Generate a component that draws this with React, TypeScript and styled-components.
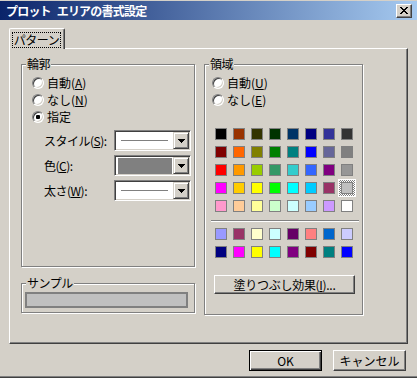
import React from 'react';
import styled, { createGlobalStyle } from 'styled-components';

const GlobalStyle = createGlobalStyle`
  html, body { margin: 0; padding: 0; background: #D4D0C8; }
  body {
    font-family: "Noto Sans CJK JP", "Liberation Sans", sans-serif;
    font-size: 12px;
    color: #000;
  }
  * { box-sizing: border-box; }
`;

const FACE = '#D4D0C8';

const Window = styled.div`
  width: 417px;
  height: 378px;
  background: ${FACE};
  display: flex;
  flex-direction: column;
  border-top: 1px solid ${FACE};
  border-bottom: 1px solid #404040;
  box-shadow: inset 0 -1px 0 #808080;
  overflow: hidden;
`;

const TitleBar = styled.div`
  height: 19px;
  flex: none;
  display: flex;
  align-items: center;
  padding: 0 5px 0 6px;
  background: linear-gradient(to right, #0A246A, #A6CAF0);
`;

const TitleText = styled.span`
  color: #fff;
  font-weight: bold;
  font-size: 12px;
  line-height: 19px;
  letter-spacing: -0.8px;
  word-spacing: 4px;
  white-space: pre;
`;

const CloseButton = styled.div`
  margin-left: auto;
  width: 16px;
  height: 14px;
  background: ${FACE};
  border: 1px solid;
  border-color: #fff #404040 #404040 #fff;
  box-shadow: inset -1px -1px 0 #808080, inset 1px 1px 0 ${FACE};
  display: flex;
  align-items: center;
  justify-content: center;
  svg { display: block; }
`;

const Body = styled.div`
  display: flex;
  flex-direction: column;
  padding: 8px 0 0 9px;
`;

const TabStrip = styled.div`
  display: flex;
  height: 20px;
`;

const Tab = styled.div`
  position: relative;
  z-index: 1;
  width: 56px;
  height: 21px;
  background: ${FACE};
  border-top: 1px solid #fff;
  border-left: 1px solid #fff;
  border-right: 1px solid #404040;
  border-radius: 2px 2px 0 0;
  box-shadow: inset -1px 0 0 #808080;
  padding: 3px 0 0 2px;
`;

const FocusRect = styled.div`
  width: 49px;
  height: 16px;
  outline: 1px dotted #000;
  outline-offset: -1px;
  display: flex;
  align-items: center;
  justify-content: center;
  line-height: 14px;
  letter-spacing: -0.5px;
`;

const Panel = styled.div`
  width: 399px;
  height: 296px;
  border-top: 1px solid #fff;
  border-left: 1px solid #fff;
  border-right: 1px solid #404040;
  border-bottom: 1px solid #404040;
  box-shadow: inset -1px -1px 0 #808080;
  padding: 15px 0 0 11px;
  display: flex;
  gap: 9px;
  align-items: flex-start;
`;

const Column = styled.div`
  display: flex;
  flex-direction: column;
  gap: 16px;
  width: 174px;
`;

const Group = styled.div<{ $h: number; $w: number; $pad: string }>`
  position: relative;
  width: ${p => p.$w}px;
  height: ${p => p.$h}px;
  border: 1px solid #808080;
  box-shadow: 1px 1px 0 #fff, inset 1px 1px 0 #fff;
  padding: ${p => p.$pad};
`;

const Legend = styled.span`
  position: absolute;
  top: -8px;
  left: 4px;
  padding: 0 1px;
  background: ${FACE};
  line-height: 14px;
  white-space: nowrap;
  letter-spacing: -0.5px;
`;

const RadioRow = styled.div`
  height: 17px;
  display: flex;
  align-items: center;
  gap: 3px;
  line-height: 14px;
  white-space: nowrap;
`;

const Radio = styled.span<{ $checked?: boolean }>`
  position: relative;
  width: 12px;
  height: 12px;
  flex: none;
  border-radius: 50%;
  background: #fff;
  border: 1px solid;
  border-color: #808080 #fff #fff #808080;
  box-shadow: inset 1px 1px 0 #404040, inset -1px -1px 0 ${FACE};
  &::after {
    content: '';
    display: ${p => (p.$checked ? 'block' : 'none')};
    position: absolute;
    left: 3px;
    top: 3px;
    width: 4px;
    height: 4px;
    border-radius: 1px;
    background: #000;
  }
`;

const Key = styled.span`
  text-decoration: underline;
  text-underline-offset: 1px;
`;

const ComboList = styled.div`
  margin-top: 5px;
  padding-left: 12px;
  display: flex;
  flex-direction: column;
  gap: 4px;
`;

const ComboRow = styled.div`
  height: 21px;
  display: flex;
  align-items: center;
`;

const ComboLabel = styled.span`
  width: 70px;
  line-height: 14px;
  white-space: nowrap;
  letter-spacing: -0.5px;
`;

const Combo = styled.div`
  width: 77px;
  height: 21px;
  background: #fff;
  border: 1px solid;
  border-color: #808080 #fff #fff #808080;
  box-shadow: inset 1px 1px 0 #404040, inset -1px -1px 0 ${FACE};
  padding: 1px;
  display: flex;
`;

const ComboValue = styled.div<{ $fill?: string }>`
  flex: 1;
  display: flex;
  align-items: center;
  padding: ${p => (p.$fill ? '1px 1px 0 2px' : '0 5px')};
  & > span {
    display: block;
    width: 100%;
    height: ${p => (p.$fill ? '100%' : '1px')};
    background: ${p => p.$fill ?? '#808080'};
  }
`;

const DropButton = styled.div`
  width: 16px;
  height: 17px;
  background: ${FACE};
  border: 1px solid;
  border-color: ${FACE} #404040 #404040 ${FACE};
  box-shadow: inset 1px 1px 0 #fff, inset -1px -1px 0 #808080;
  display: flex;
  align-items: center;
  justify-content: center;
  svg { display: block; }
`;

const SampleBox = styled.div`
  width: 163px;
  height: 16px;
  background: #C0C0C0;
  border: 2px solid #808080;
`;

const Palette = styled.div<{ $mt: number }>`
  margin-top: ${p => p.$mt}px;
  display: grid;
  grid-template-columns: repeat(8, 18px);
  grid-auto-rows: 18px;
`;

const Cell = styled.div<{ $selected?: boolean }>`
  display: flex;
  align-items: center;
  justify-content: center;
  background: ${p =>
    p.$selected
      ? 'repeating-conic-gradient(#808080 0% 25%, #fff 0% 50%) 0 0 / 2px 2px'
      : 'transparent'};
  box-shadow: ${p => (p.$selected ? 'inset 0 0 0 1px #fff' : 'none')};
`;

const Swatch = styled.span<{ $color: string }>`
  width: 12px;
  height: 12px;
  background: ${p => p.$color};
  border: 1px solid #808080;
`;

const Separator = styled.div`
  margin: 5px 0 0 -1px;
  width: 148px;
  height: 2px;
  border-top: 1px solid #808080;
  border-bottom: 1px solid #fff;
`;

const PushButton = styled.div<{ $default?: boolean; $w: number; $h: number }>`
  width: ${p => p.$w}px;
  height: ${p => p.$h}px;
  background: ${FACE};
  display: flex;
  align-items: center;
  justify-content: center;
  line-height: 14px;
  white-space: nowrap;
  border: 1px solid;
  border-color: ${p => (p.$default ? '#000' : '#fff #404040 #404040 #fff')};
  box-shadow: ${p =>
    p.$default
      ? `inset 1px 1px 0 #fff, inset -1px -1px 0 #404040, inset -2px -2px 0 #808080`
      : `inset -1px -1px 0 #808080, inset 1px 1px 0 ${FACE}`};
`;

const FillButton = styled(PushButton)`
  margin: 14px 0 0 2px;
  letter-spacing: -0.3px;
`;

const ButtonRow = styled.div`
  margin-top: 6px;
  padding-right: 11px;
  display: flex;
  justify-content: flex-end;
  gap: 11px;
`;

const palette1 = [
  ['#000000', '#993300', '#333300', '#003300', '#003366', '#000080', '#333399', '#333333'],
  ['#800000', '#FF6600', '#808000', '#008000', '#008080', '#0000FF', '#666699', '#808080'],
  ['#FF0000', '#FF9900', '#99CC00', '#339966', '#33CCCC', '#3366FF', '#800080', '#969696'],
  ['#FF00FF', '#FFCC00', '#FFFF00', '#00FF00', '#00FFFF', '#00CCFF', '#993366', '#C0C0C0'],
  ['#FF99CC', '#FFCC99', '#FFFF99', '#CCFFCC', '#CCFFFF', '#99CCFF', '#CC99FF', '#FFFFFF'],
];
const palette2 = [
  ['#9999FF', '#993366', '#FFFFCC', '#CCFFFF', '#660066', '#FF8080', '#0066CC', '#CCCCFF'],
  ['#000080', '#FF00FF', '#FFFF00', '#00FFFF', '#800080', '#800000', '#008080', '#0000FF'],
];

const CloseGlyph = () => (
  <svg width="8" height="7" viewBox="0 0 8 7" shapeRendering="crispEdges">
    <path
      fill="#000"
      d="M0 0h2v1H0z M6 0h2v1H6z M1 1h2v1H1z M5 1h2v1H5z M2 2h4v1H2z M3 3h2v1H3z M2 4h4v1H2z M1 5h2v1H1z M5 5h2v1H5z M0 6h2v1H0z M6 6h2v1H6z"
    />
  </svg>
);

const Arrow = () => (
  <svg width="7" height="4" viewBox="0 0 7 4" shapeRendering="crispEdges">
    <path fill="#000" d="M0 0h7v1H0z M1 1h5v1H1z M2 2h3v1H2z M3 3h1v1H3z" />
  </svg>
);

const ComboBox = ({ fill }: { fill?: string }) => (
  <Combo>
    <ComboValue $fill={fill}>
      <span />
    </ComboValue>
    <DropButton>
      <Arrow />
    </DropButton>
  </Combo>
);

const PaletteGrid = ({ rows, mt, selected }: { rows: string[][]; mt: number; selected?: [number, number] }) => (
  <Palette $mt={mt}>
    {rows.map((row, r) =>
      row.map((c, i) => (
        <Cell key={`${r}-${i}`} $selected={!!selected && selected[0] === r && selected[1] === i}>
          <Swatch $color={c} />
        </Cell>
      ))
    )}
  </Palette>
);

export default function App() {
  return (
    <>
      <GlobalStyle />
      <Window>
        <TitleBar>
          <TitleText>プロット エリアの書式設定</TitleText>
          <CloseButton>
            <CloseGlyph />
          </CloseButton>
        </TitleBar>
        <Body>
          <TabStrip>
            <Tab>
              <FocusRect>パターン</FocusRect>
            </Tab>
          </TabStrip>
          <Panel>
            <Column>
              <Group $w={174} $h={203} $pad="9px 0 0 10px">
                <Legend>輪郭</Legend>
                <RadioRow>
                  <Radio />
                  <span>自動(<Key>A</Key>)</span>
                </RadioRow>
                <RadioRow>
                  <Radio />
                  <span>なし(<Key>N</Key>)</span>
                </RadioRow>
                <RadioRow>
                  <Radio $checked />
                  <span>指定</span>
                </RadioRow>
                <ComboList>
                  <ComboRow>
                    <ComboLabel>スタイル(<Key>S</Key>):</ComboLabel>
                    <ComboBox />
                  </ComboRow>
                  <ComboRow>
                    <ComboLabel>色(<Key>C</Key>):</ComboLabel>
                    <ComboBox fill="#808080" />
                  </ComboRow>
                  <ComboRow>
                    <ComboLabel>太さ(<Key>W</Key>):</ComboLabel>
                    <ComboBox />
                  </ComboRow>
                </ComboList>
              </Group>
              <Group $w={174} $h={30} $pad="8px 0 0 3px">
                <Legend>サンプル</Legend>
                <SampleBox />
              </Group>
            </Column>
            <Group $w={159} $h={251} $pad="9px 0 0 7px">
              <Legend>領域</Legend>
              <RadioRow>
                <Radio />
                <span>自動(<Key>U</Key>)</span>
              </RadioRow>
              <RadioRow>
                <Radio />
                <span>なし(<Key>E</Key>)</span>
              </RadioRow>
              <PaletteGrid rows={palette1} mt={17} selected={[3, 7]} />
              <Separator />
              <PaletteGrid rows={palette2} mt={3} />
              <FillButton $w={141} $h={19}>
                塗りつぶし効果(<Key>I</Key>)...
              </FillButton>
            </Group>
          </Panel>
        </Body>
        <ButtonRow>
          <PushButton $default $w={73} $h={21}>OK</PushButton>
          <PushButton $w={73} $h={21}>キャンセル</PushButton>
        </ButtonRow>
      </Window>
    </>
  );
}
